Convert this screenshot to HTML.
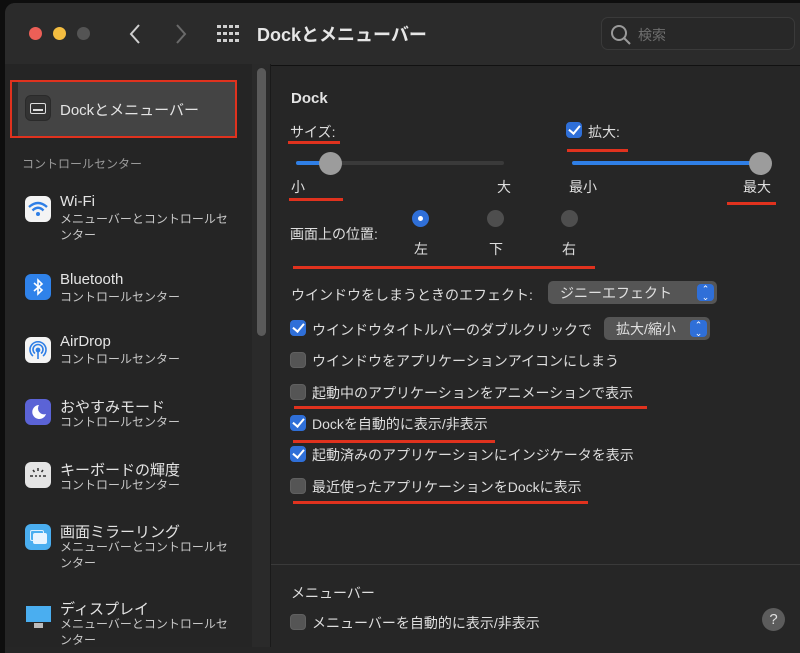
<!DOCTYPE html>
<html><head><meta charset="utf-8"><style>
*{margin:0;padding:0;box-sizing:border-box}
body{width:800px;height:647px;background:#0e0e0e;position:relative;overflow:hidden;font-family:"Liberation Sans","Noto Sans CJK JP",sans-serif;color:#dcdcdc}
.a{position:absolute;white-space:nowrap}
.win{position:absolute;left:5px;top:3px;width:800px;height:650px;background:#262626;border-radius:10px 0 0 0;overflow:hidden}
.tb{position:absolute;left:0;top:0;width:800px;height:63px;background:#2b2b2b;border-bottom:1px solid #111}
.ru{position:absolute;height:3px;background:#e0321e}
.cb{position:absolute;width:16px;height:16px;border-radius:4px;background:#555;border:1px solid #606060}
.cb.on{background:#2f6fd8;border-color:#2f6fd8}
.cb.on::after{content:"";position:absolute;left:4px;top:0px;width:5px;height:9px;border:solid #fff;border-width:0 2.5px 2.5px 0;transform:rotate(40deg)}
.t{font-size:14px;color:#dedede}
.ic{position:absolute;width:26px;height:26px;border-radius:6px}
.st{font-size:15px;color:#e4e4e4}
.ss{font-size:12px;color:#c8c8c8;line-height:16px}
.pop{position:absolute;height:23px;background:#555;border-radius:5px;font-size:14px;color:#e0e0e0;padding:2px 0 0 12px}
.pop i{position:absolute;right:3px;top:3px;width:17px;height:17px;border-radius:4px;background:#2f6fd8;font-style:normal;font-size:9px;color:#fff;text-align:center;line-height:8px;padding-top:1px}
</style></head><body>
<div class="win">
<div class="tb"></div>
</div>
<!-- titlebar contents -->
<div class="a" style="left:29px;top:27px;width:13px;height:13px;border-radius:50%;background:#ec5f57"></div>
<div class="a" style="left:53px;top:27px;width:13px;height:13px;border-radius:50%;background:#f4bd40"></div>
<div class="a" style="left:77px;top:27px;width:13px;height:13px;border-radius:50%;background:#545454"></div>
<svg class="a" style="left:128px;top:23px" width="14" height="22"><path d="M11 2 L3 11 L11 20" stroke="#cfcfcf" stroke-width="2" fill="none"/></svg>
<svg class="a" style="left:174px;top:23px" width="14" height="22"><path d="M3 2 L11 11 L3 20" stroke="#6a6a6a" stroke-width="2" fill="none"/></svg>
<svg class="a" style="left:217px;top:25px" width="22" height="18" fill="#cfcfcf">
<rect x="0" y="0" width="4" height="3"/><rect x="6" y="0" width="4" height="3"/><rect x="12" y="0" width="4" height="3"/><rect x="18" y="0" width="4" height="3"/>
<rect x="0" y="7" width="4" height="3"/><rect x="6" y="7" width="4" height="3"/><rect x="12" y="7" width="4" height="3"/><rect x="18" y="7" width="4" height="3"/>
<rect x="0" y="14" width="4" height="3"/><rect x="6" y="14" width="4" height="3"/><rect x="12" y="14" width="4" height="3"/><rect x="18" y="14" width="4" height="3"/></svg>
<div class="a" style="left:257px;top:21px;font-size:18px;font-weight:bold;color:#e6e6e6">Dockとメニューバー</div>
<div class="a" style="left:601px;top:17px;width:194px;height:33px;border:1px solid #3a3a3a;border-radius:7px;background:#282828"></div>
<svg class="a" style="left:610px;top:24px" width="22" height="22"><circle cx="9" cy="9" r="7" stroke="#9a9a9a" stroke-width="2" fill="none"/><path d="M14 14 L20 20" stroke="#9a9a9a" stroke-width="2"/></svg>
<div class="a" style="left:638px;top:25px;font-size:14px;color:#6e6e6e">検索</div>

<!-- sidebar -->
<div class="a" style="left:5px;top:64px;width:247px;height:583px;background:#252525"></div>
<div class="a" style="left:252px;top:64px;width:18px;height:583px;background:#2a2a2a"></div>
<div class="a" style="left:257px;top:68px;width:9px;height:268px;border-radius:5px;background:#5a5a5a"></div>
<div class="a" style="left:270px;top:64px;width:1px;height:583px;background:#1a1a1a"></div>
<div class="a" style="left:10px;top:80px;width:227px;height:58px;background:#444;border:2.5px solid #e0321e"></div>
<div class="a" style="left:12px;top:82px;width:6px;height:54px;background:#2e2e2e"></div>
<div class="ic" style="left:25px;top:95px;background:#333;border:1px solid #2a2a2a"></div>
<div class="a" style="left:30px;top:103px;width:16px;height:11px;border:1.5px solid #ddd;border-radius:2px"></div>
<div class="a" style="left:33px;top:109px;width:10px;height:2px;background:#ddd"></div>
<div class="a st" style="left:60px;top:99px">Dockとメニューバー</div>
<div class="a" style="left:22px;top:155px;font-size:12px;color:#9a9a9a">コントロールセンター</div>

<div class="ic" style="left:25px;top:196px;background:#f4f4f4"></div>
<svg class="a" style="left:27px;top:200px" width="22" height="18"><path d="M2 7 Q11 -1 20 7" stroke="#2f7fe6" stroke-width="2.4" fill="none"/><path d="M5.5 10.5 Q11 5 16.5 10.5" stroke="#2f7fe6" stroke-width="2.4" fill="none"/><circle cx="11" cy="14" r="2" fill="#2f7fe6"/></svg>
<div class="a st" style="left:60px;top:193px">Wi-Fi</div>
<div class="a ss" style="left:60px;top:211px">メニューバーとコントロールセ<br>ンター</div>

<div class="ic" style="left:25px;top:274px;background:#2f82ea"></div>
<svg class="a" style="left:31px;top:278px" width="14" height="18"><path d="M3 5 L11 12 L7 16 L7 2 L11 6 L3 13" stroke="#fff" stroke-width="1.6" fill="none"/></svg>
<div class="a st" style="left:60px;top:271px">Bluetooth</div>
<div class="a ss" style="left:60px;top:289px">コントロールセンター</div>

<div class="ic" style="left:25px;top:337px;background:#f4f4f4"></div>
<svg class="a" style="left:27px;top:339px" width="22" height="22" fill="none" stroke="#2f7fe6" stroke-width="1.6"><path d="M6 17 A8 8 0 1 1 16 17"/><path d="M8 14.5 A5 5 0 1 1 14 14.5"/><circle cx="11" cy="11" r="1.6" fill="#2f7fe6"/><path d="M11 13 L11 20"/></svg>
<div class="a st" style="left:60px;top:333px">AirDrop</div>
<div class="a ss" style="left:60px;top:351px">コントロールセンター</div>

<div class="ic" style="left:25px;top:399px;background:#5b63d6"></div>
<svg class="a" style="left:30px;top:403px" width="18" height="18"><path d="M9 2 A7 7 0 1 0 16 11 A6 6 0 0 1 9 2Z" fill="#fff"/></svg>
<div class="a st" style="left:60px;top:396px">おやすみモード</div>
<div class="a ss" style="left:60px;top:414px">コントロールセンター</div>

<div class="ic" style="left:25px;top:462px;background:#e4e4e4"></div>
<svg class="a" style="left:28px;top:466px" width="20" height="18" stroke="#333" stroke-width="1.5"><path d="M10 2 L10 5 M5 4 L6.5 6 M15 4 L13.5 6 M2 10 L5 10 M7 10 L9 10 M11 10 L13 10 M15 10 L18 10"/></svg>
<div class="a st" style="left:60px;top:459px">キーボードの輝度</div>
<div class="a ss" style="left:60px;top:477px">コントロールセンター</div>

<div class="ic" style="left:25px;top:524px;background:#4aaef0"></div>
<div class="a" style="left:30px;top:530px;width:14px;height:11px;border:1.5px solid #dff0ff;border-radius:2px"></div>
<div class="a" style="left:33px;top:533px;width:14px;height:11px;background:#e8f4ff;border-radius:2px"></div>
<div class="a st" style="left:60px;top:521px">画面ミラーリング</div>
<div class="a ss" style="left:60px;top:539px">メニューバーとコントロールセ<br>ンター</div>

<div class="a" style="left:26px;top:606px;width:25px;height:16px;background:#4aaef0"></div>
<div class="a" style="left:34px;top:623px;width:9px;height:5px;background:#bbb"></div>
<div class="a st" style="left:60px;top:598px">ディスプレイ</div>
<div class="a ss" style="left:60px;top:616px">メニューバーとコントロールセ<br>ンター</div>

<!-- main -->
<div class="a" style="left:291px;top:90px;font-size:15px;font-weight:bold;color:#e4e4e4">Dock</div>
<div class="a t" style="left:290px;top:122px">サイズ:</div>
<div class="ru" style="left:288px;top:141px;width:52px"></div>
<div class="a" style="left:296px;top:161px;width:208px;height:4px;border-radius:2px;background:#3a3a3a"></div>
<div class="a" style="left:296px;top:161px;width:30px;height:4px;border-radius:2px;background:#2f7fe6"></div>
<div class="a" style="left:319px;top:152px;width:23px;height:23px;border-radius:50%;background:#9c9c9c"></div>
<div class="a t" style="left:291px;top:177px">小</div>
<div class="ru" style="left:289px;top:198px;width:54px"></div>
<div class="a t" style="left:497px;top:177px">大</div>

<div class="cb on" style="left:566px;top:122px"></div>
<div class="a t" style="left:588px;top:122px">拡大:</div>
<div class="ru" style="left:567px;top:149px;width:61px"></div>
<div class="a" style="left:572px;top:161px;width:188px;height:4px;border-radius:2px;background:#2f7fe6"></div>
<div class="a" style="left:749px;top:152px;width:23px;height:23px;border-radius:50%;background:#9c9c9c"></div>
<div class="a t" style="left:569px;top:177px">最小</div>
<div class="a t" style="left:743px;top:177px">最大</div>
<div class="ru" style="left:727px;top:202px;width:49px"></div>

<div class="a t" style="left:290px;top:224px">画面上の位置:</div>
<div class="a" style="left:412px;top:210px;width:17px;height:17px;border-radius:50%;background:#2f6fd8"></div>
<div class="a" style="left:418px;top:216px;width:5px;height:5px;border-radius:50%;background:#fff"></div>
<div class="a" style="left:487px;top:210px;width:17px;height:17px;border-radius:50%;background:#4e4e4e"></div>
<div class="a" style="left:561px;top:210px;width:17px;height:17px;border-radius:50%;background:#4e4e4e"></div>
<div class="a t" style="left:414px;top:239px">左</div>
<div class="a t" style="left:489px;top:239px">下</div>
<div class="a t" style="left:562px;top:239px">右</div>
<div class="ru" style="left:293px;top:266px;width:302px"></div>

<div class="a t" style="left:291px;top:285px">ウインドウをしまうときのエフェクト:</div>
<div class="pop" style="left:548px;top:281px;width:169px">ジニーエフェクト<i>⌃<br>⌄</i></div>

<div class="cb on" style="left:290px;top:320px"></div>
<div class="a t" style="left:312px;top:320px">ウインドウタイトルバーのダブルクリックで</div>
<div class="pop" style="left:604px;top:317px;width:106px">拡大/縮小<i>⌃<br>⌄</i></div>
<div class="cb" style="left:290px;top:352px"></div>
<div class="a t" style="left:312px;top:351px">ウインドウをアプリケーションアイコンにしまう</div>
<div class="cb" style="left:290px;top:384px"></div>
<div class="a t" style="left:312px;top:383px">起動中のアプリケーションをアニメーションで表示</div>
<div class="ru" style="left:294px;top:406px;width:353px"></div>
<div class="cb on" style="left:290px;top:415px"></div>
<div class="a t" style="left:312px;top:414px">Dockを自動的に表示/非表示</div>
<div class="ru" style="left:293px;top:440px;width:202px"></div>
<div class="cb on" style="left:290px;top:446px"></div>
<div class="a t" style="left:312px;top:445px">起動済みのアプリケーションにインジケータを表示</div>
<div class="cb" style="left:290px;top:478px"></div>
<div class="a t" style="left:312px;top:477px">最近使ったアプリケーションをDockに表示</div>
<div class="ru" style="left:293px;top:501px;width:295px"></div>

<div class="a" style="left:271px;top:564px;width:529px;height:1px;background:#3a3a3a"></div>
<div class="a t" style="left:291px;top:583px">メニューバー</div>
<div class="cb" style="left:290px;top:614px"></div>
<div class="a t" style="left:312px;top:613px">メニューバーを自動的に表示/非表示</div>
<div class="a" style="left:762px;top:608px;width:23px;height:23px;border-radius:50%;background:#5c5c5c;color:#e0e0e0;font-size:15px;text-align:center;line-height:23px">?</div>
</body></html>
